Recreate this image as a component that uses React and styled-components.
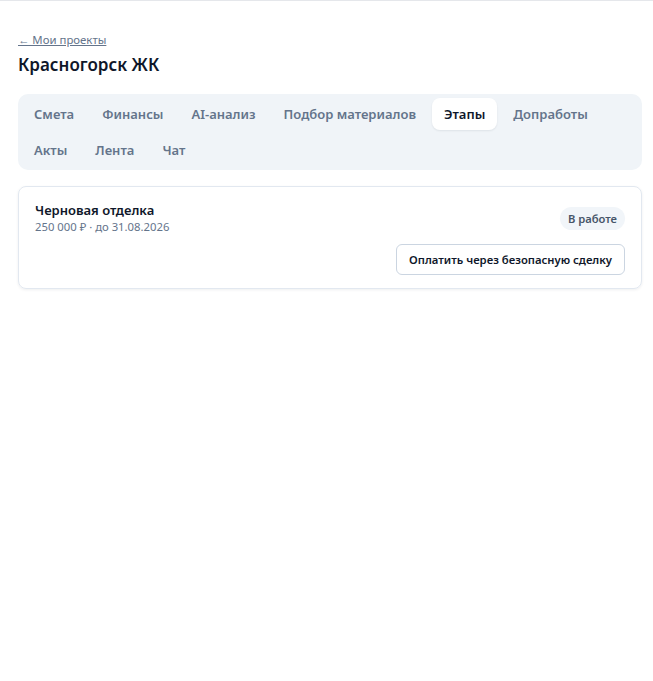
import React from 'react';
import styled, { createGlobalStyle } from 'styled-components';

const GlobalStyle = createGlobalStyle`
    body {
        margin: 0;
        background: #ffffff;
        font-family: "Noto Sans", "Open Sans", Arial, sans-serif;
        color: #0f172a;
    }
`;

const tabs = ['Смета', 'Финансы', 'AI-анализ', 'Подбор материалов', 'Этапы', 'Допработы', 'Акты', 'Лента', 'Чат'];

const stages = [
    { title: 'Черновая отделка', sum: '250 000 ₽', due: '31.08.2026', status: 'В работе' },
];

const App = () => {
    return (
        <>
            <GlobalStyle />
            <TopBar />
            <Page>
                <BackLink href="#">← Мои проекты</BackLink>
                <Title>Красногорск ЖК</Title>
                <Tabs>
                    {tabs.map((t) => (
                        <Tab key={t} $active={t === 'Этапы'}>{t}</Tab>
                    ))}
                </Tabs>
                {stages.map((s) => (
                    <Card key={s.title}>
                        <CardHead>
                            <div>
                                <StageName>{s.title}</StageName>
                                <StageMeta>{s.sum} · до {s.due}</StageMeta>
                            </div>
                            <Badge>{s.status}</Badge>
                        </CardHead>
                        <Actions>
                            <PayBtn>Оплатить через безопасную сделку</PayBtn>
                        </Actions>
                    </Card>
                ))}
            </Page>
        </>
    );
};

const TopBar = styled.div`
    height: 1px;
    border-top: 1px solid #e5e7eb;
`;

const Page = styled.div`
    padding: 30px 11px 32px 18px;
    display: flex;
    flex-direction: column;
`;

const BackLink = styled.a`
    align-self: flex-start;
    font-size: 11.4px;
    color: #64748b;
    text-decoration: underline;
    line-height: 16px;
`;

const Title = styled.h1`
    margin: 5px 0 17px;
    font-size: 17px;
    font-weight: 600;
    line-height: 24px;
    color: #0f172a;
`;

const Tabs = styled.div`
    display: flex;
    flex-wrap: wrap;
    gap: 4px;
    padding: 4px;
    background: #f0f4f8;
    border-radius: 10px;
    margin-bottom: 16px;
`;

const Tab = styled.button`
    height: 32px;
    padding: 0 12px;
    border: none;
    border-radius: 8px;
    font-family: inherit;
    font-size: 13px;
    font-weight: 600;
    background: ${(p) => (p.$active ? '#ffffff' : 'transparent')};
    color: ${(p) => (p.$active ? '#0f172a' : '#64748b')};
    box-shadow: ${(p) => (p.$active ? '0 1px 2px rgba(15, 23, 42, 0.08)' : 'none')};
    cursor: pointer;
`;

const Card = styled.div`
    border: 1px solid #e2e8f0;
    border-radius: 8px;
    padding: 14px 16px 13px;
    box-shadow: 0 1px 3px rgba(15, 23, 42, 0.07);
`;

const CardHead = styled.div`
    display: flex;
    justify-content: space-between;
    align-items: center;
`;

const StageName = styled.div`
    font-size: 13px;
    font-weight: 600;
    line-height: 18px;
    color: #0f172a;
`;

const StageMeta = styled.div`
    font-size: 11.3px;
    line-height: 16px;
    color: #64748b;
`;

const Badge = styled.span`
    padding: 3px 8px;
    border-radius: 999px;
    background: #f1f5f9;
    color: #475569;
    font-size: 11.2px;
    font-weight: 600;
    line-height: 17px;
`;

const Actions = styled.div`
    display: flex;
    justify-content: flex-end;
    margin-top: 9px;
`;

const PayBtn = styled.button`
    height: 31px;
    padding: 0 12px;
    border: 1px solid #cbd5e1;
    border-radius: 6px;
    background: #ffffff;
    font-family: inherit;
    font-size: 11.3px;
    font-weight: 600;
    color: #0f172a;
    cursor: pointer;
`;

export default App;
